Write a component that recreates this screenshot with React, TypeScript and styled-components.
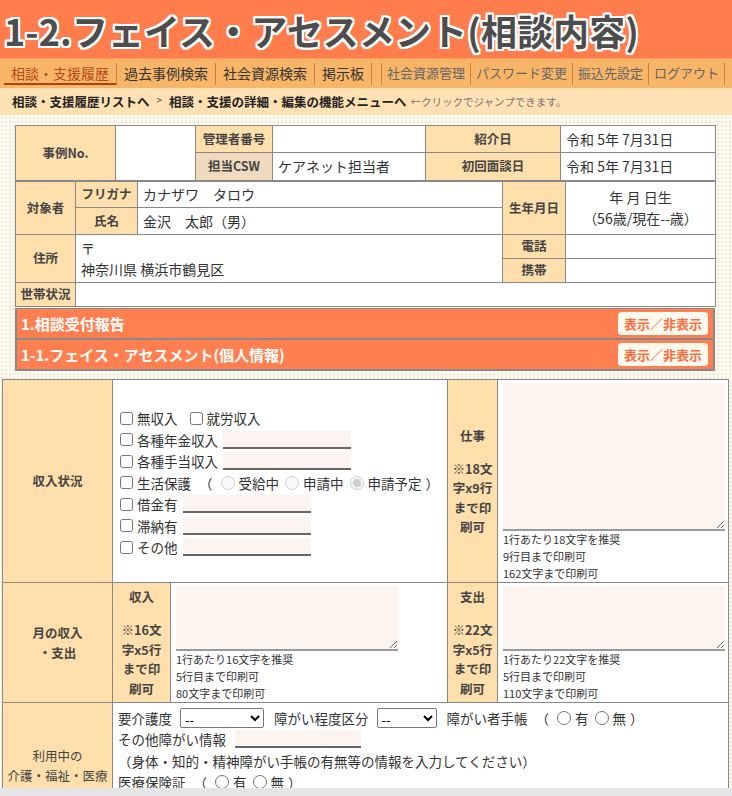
import React from 'react';
import styled, { createGlobalStyle } from 'styled-components';

const Global = createGlobalStyle`
  html, body { margin: 0; padding: 0; }
  body {
    font-family: "Noto Sans CJK JP", "Noto Sans", sans-serif;
    color: #333;
    background-color: #fcf9ef;
    background-image: radial-gradient(#eee8d4 0.7px, transparent 0.9px);
    background-size: 4px 4px;
  }
  input, select, textarea, button { font-family: inherit; }
`;

const Header = styled.header`
  background: #ff7c4d;
  height: 58px;
  padding-left: 4px;
  display: flex;
  align-items: center;
`;

const Title = styled.h1`
  margin: 2px 0 0;
  font-size: 36px;
  font-weight: 700;
  line-height: 1;
  color: #4d4d4d;
  letter-spacing: 0.1px;
  text-shadow:
    -2px -2px 0 #fff, 0 -2px 0 #fff, 2px -2px 0 #fff, 2px 0 0 #fff,
    2px 2px 0 #fff, 0 2px 0 #fff, -2px 2px 0 #fff, -2px 0 0 #fff,
    -1px -2px 0 #fff, 1px -2px 0 #fff, -1px 2px 0 #fff, 1px 2px 0 #fff;
`;

const Nav = styled.nav`
  background: #f8b567;
  border-top: 1px solid #fb9d60;
  height: 29px;
  padding-left: 4px;
  display: flex;
  align-items: center;
`;

const NavGroup = styled.div`
  display: flex;
  align-items: center;
`;

const NavItem = styled.a<{ $active?: boolean }>`
  padding: 0 7px 2px;
  font-size: 14px;
  line-height: 20px;
  color: ${(p) => (p.$active ? '#b5491a' : '#333')};
  border-right: 1px solid #c98143;
  text-decoration: none;
  box-shadow: ${(p) => (p.$active ? 'inset 0 -2px 0 #a84414' : 'none')};
`;

const SubNav = styled.div`
  display: flex;
  align-items: center;
  margin-left: 9px;
  border-right: 1px solid #c98143;
`;

const SubNavItem = styled.a`
  padding: 0 5px 2px;
  font-size: 13px;
  line-height: 20px;
  color: #666;
  border-left: 1px solid #c98143;
`;

const Breadcrumb = styled.div`
  background: #ffe1b3;
  height: 27px;
  padding-left: 12px;
  display: flex;
  align-items: center;
  gap: 2px;
`;

const Crumb = styled.a`
  font-size: 12.5px;
  font-weight: 700;
  color: #222;
`;

const CrumbSep = styled.span`
  font-size: 10px;
  color: #444;
  margin: 0 5px 4px;
`;

const CrumbHint = styled.span`
  font-size: 10.5px;
  color: #777;
  margin-left: 2px;
`;

const Content = styled.main`
  padding: 10px 17px 0 15px;
  display: flex;
  flex-direction: column;
`;

const InfoTable = styled.table`
  width: 700px;
  border-collapse: collapse;
  table-layout: fixed;
  background: #fff;
  border: 1px solid #777;
`;

const Row = styled.tr<{ $h: number }>`
  height: ${(p) => p.$h}px;
`;

const Label = styled.th<{ $tone?: 'csw' }>`
  background: ${(p) => (p.$tone === 'csw' ? '#efdabd' : '#ffdfab')};
  border: 1px solid #888;
  font-size: 12.5px;
  font-weight: 700;
  color: #444;
  text-align: center;
  padding: 0 3px;
  line-height: 1.3;
`;

const Cell = styled.td<{ $center?: boolean }>`
  border: 1px solid #888;
  font-size: 14px;
  color: #333;
  padding: 0 5px;
  text-align: ${(p) => (p.$center ? 'center' : 'left')};
  line-height: 21px;
`;

const SectionGroup = styled.div`
  margin-top: 1px;
  border: 2px solid #888;
  border-top-width: 1px;
`;

const SectionBar = styled.div`
  background: #ff7f50;
  height: 29px;
  padding: 0 5px 0 4px;
  display: flex;
  align-items: center;
  justify-content: space-between;
  color: #fff;
  font-size: 15px;
  font-weight: 700;
  & + & { border-top: 2px solid #888; }
`;

const ToggleButton = styled.button`
  background: #fffaf0;
  color: #ff6a3a;
  border: none;
  border-radius: 4px;
  font-size: 13px;
  font-weight: 700;
  height: 23px;
  padding: 0 6px;
`;

const FormTable = styled.table`
  width: 726px;
  margin: 8px 0 0 2px;
  border-collapse: collapse;
  table-layout: fixed;
  background: #fff;
  border: 1px solid #777;
`;

const FLabel = styled.th<{ $plain?: boolean }>`
  background: #ffdfab;
  border: 1px solid #888;
  font-size: 12.5px;
  font-weight: ${(p) => (p.$plain ? 400 : 700)};
  color: #444;
  text-align: center;
  padding: 0 2px;
  line-height: 20px;
`;

const LabelNote = styled.div`
  margin-top: 13px;
  line-height: 19.5px;
`;

const FCell = styled.td<{ $top?: boolean }>`
  border: 1px solid #888;
  font-size: 13.5px;
  color: #333;
  padding: ${(p) => (p.$top ? '4px 5px 0 5px' : '3px 4px 0 5px')};
  vertical-align: ${(p) => (p.$top ? 'top' : 'middle')};
`;

const Line = styled.div`
  display: flex;
  align-items: center;
  height: 21.5px;
  white-space: nowrap;
`;

const Check = styled.input.attrs({ type: 'checkbox' })`
  width: 13px;
  height: 13px;
  margin: 0 4px 0 2px;
`;

const Radio = styled.input.attrs({ type: 'radio' })`
  width: 14px;
  height: 14px;
  margin: 0 4px 0 6px;
`;

const Paren = styled.span`
  margin: 0 2px 0 8px;
`;

const CloseParen = styled.span`
  margin-left: 4px;
`;

const TextField = styled.input<{ $w: number }>`
  width: ${(p) => p.$w}px;
  height: 18px;
  box-sizing: border-box;
  background: #fcf4ee;
  border: none;
  border-bottom: 2px solid #666;
  margin-left: 5px;
  padding: 0 3px;
`;

const Memo = styled.textarea<{ $h: number }>`
  display: block;
  width: 222px;
  height: ${(p) => p.$h}px;
  box-sizing: border-box;
  background: #fcf4ee;
  border: none;
  border-bottom: 2px solid #9a9a9a;
  margin: 0;
`;

const Notes = styled.div`
  font-size: 11px;
  line-height: 17px;
  color: #333;
`;

const Select = styled.select<{ $w: number }>`
  width: ${(p) => p.$w}px;
  height: 20px;
  font-size: 13px;
  margin: 0 10px 0 8px;
  background: #fff;
  border: 1px solid #767676;
  border-radius: 2px;
`;

const BottomBar = styled.div`
  position: fixed;
  left: 0;
  right: 0;
  bottom: 0;
  height: 8px;
  background: #e5e5e5;
`;

const incomeRows = ['各種年金収入', '各種手当収入'];

function PrintNote({ head, chars, lines }: { head: string; chars: number; lines: number }) {
  return (
    <FLabel>
      {head}
      <LabelNote>
        ※{chars}文
        <br />
        字x{lines}行
        <br />
        まで印
        <br />
        刷可
      </LabelNote>
    </FLabel>
  );
}

function MemoCell({ h, chars, lines }: { h: number; chars: number; lines: number }) {
  return (
    <FCell>
      <Memo $h={h} />
      <Notes>
        1行あたり{chars}文字を推奨
        <br />
        {lines}行目まで印刷可
        <br />
        {chars * lines}文字まで印刷可
      </Notes>
    </FCell>
  );
}

export default function App() {
  return (
    <>
      <Global />
      <Header>
        <Title>1-2.フェイス・アセスメント(相談内容)</Title>
      </Header>
      <Nav>
        <NavGroup>
          <NavItem $active>相談・支援履歴</NavItem>
          <NavItem>過去事例検索</NavItem>
          <NavItem>社会資源検索</NavItem>
          <NavItem>掲示板</NavItem>
        </NavGroup>
        <SubNav>
          {['社会資源管理', 'パスワード変更', '振込先設定', 'ログアウト'].map((t) => (
            <SubNavItem key={t}>{t}</SubNavItem>
          ))}
        </SubNav>
      </Nav>
      <Breadcrumb>
        <Crumb>相談・支援履歴リストへ</Crumb>
        <CrumbSep>&gt;</CrumbSep>
        <Crumb>相談・支援の詳細・編集の機能メニューへ</Crumb>
        <CrumbHint>←クリックでジャンプできます。</CrumbHint>
      </Breadcrumb>

      <Content>
        <InfoTable>
          <colgroup>
            <col style={{ width: 100 }} />
            <col style={{ width: 80 }} />
            <col style={{ width: 77 }} />
            <col style={{ width: 153 }} />
            <col style={{ width: 135 }} />
            <col style={{ width: 155 }} />
          </colgroup>
          <tbody>
            <Row $h={27}>
              <Label rowSpan={2}>事例No.</Label>
              <Cell rowSpan={2} />
              <Label>管理者番号</Label>
              <Cell />
              <Label>紹介日</Label>
              <Cell>令和 5年 7月31日</Cell>
            </Row>
            <Row $h={28}>
              <Label $tone="csw">担当CSW</Label>
              <Cell>ケアネット担当者</Cell>
              <Label>初回面談日</Label>
              <Cell>令和 5年 7月31日</Cell>
            </Row>
          </tbody>
        </InfoTable>

        <InfoTable>
          <colgroup>
            <col style={{ width: 60 }} />
            <col style={{ width: 62 }} />
            <col style={{ width: 365 }} />
            <col style={{ width: 63 }} />
            <col style={{ width: 150 }} />
          </colgroup>
          <tbody>
            <Row $h={26}>
              <Label rowSpan={2}>対象者</Label>
              <Label>フリガナ</Label>
              <Cell>カナザワ　タロウ</Cell>
              <Label rowSpan={2}>生年月日</Label>
              <Cell rowSpan={2} $center>
                年 月 日生
                <br />
                （56歳/現在--歳）
              </Cell>
            </Row>
            <Row $h={27}>
              <Label>氏名</Label>
              <Cell>金沢　太郎（男）</Cell>
            </Row>
            <Row $h={24}>
              <Label rowSpan={2}>住所</Label>
              <Cell rowSpan={2} colSpan={2}>
                〒
                <br />
                神奈川県 横浜市鶴見区
              </Cell>
              <Label>電話</Label>
              <Cell />
            </Row>
            <Row $h={24}>
              <Label>携帯</Label>
              <Cell />
            </Row>
            <Row $h={24}>
              <Label>世帯状況</Label>
              <Cell colSpan={4} />
            </Row>
          </tbody>
        </InfoTable>

        <SectionGroup>
          <SectionBar>
            <span>1.相談受付報告</span>
            <ToggleButton>表示／非表示</ToggleButton>
          </SectionBar>
          <SectionBar>
            <span>1-1.フェイス・アセスメント(個人情報)</span>
            <ToggleButton>表示／非表示</ToggleButton>
          </SectionBar>
        </SectionGroup>
      </Content>

      <FormTable>
        <colgroup>
          <col style={{ width: 110 }} />
          <col style={{ width: 58 }} />
          <col style={{ width: 277 }} />
          <col style={{ width: 50 }} />
          <col style={{ width: 231 }} />
        </colgroup>
        <tbody>
          <tr>
            <FLabel>収入状況</FLabel>
            <FCell colSpan={2}>
              <Line>
                <Check />
                無収入
                <Check style={{ marginLeft: 12 }} />
                就労収入
              </Line>
              {incomeRows.map((t) => (
                <Line key={t}>
                  <Check />
                  {t}
                  <TextField $w={128} />
                </Line>
              ))}
              <Line>
                <Check />
                生活保護
                <Paren>（</Paren>
                <Radio name="seiho" disabled />
                受給中
                <Radio name="seiho" disabled />
                申請中
                <Radio name="seiho" disabled defaultChecked />
                申請予定
                <CloseParen>）</CloseParen>
              </Line>
              {['借金有', '滞納有', 'その他'].map((t) => (
                <Line key={t}>
                  <Check />
                  {t}
                  <TextField $w={128} />
                </Line>
              ))}
            </FCell>
            <PrintNote head="仕事" chars={18} lines={9} />
            <MemoCell h={148} chars={18} lines={9} />
          </tr>
          <tr>
            <FLabel>
              月の収入
              <br />
              ・支出
            </FLabel>
            <PrintNote head="収入" chars={16} lines={5} />
            <MemoCell h={65} chars={16} lines={5} />
            <PrintNote head="支出" chars={22} lines={5} />
            <MemoCell h={65} chars={22} lines={5} />
          </tr>
          <Row $h={146}>
            <FLabel $plain>
              利用中の
              <br />
              介護・福祉・医療
              <br />
              制度
            </FLabel>
            <FCell colSpan={4} $top>
              <Line>
                要介護度
                <Select $w={84} defaultValue="--">
                  <option>--</option>
                </Select>
                障がい程度区分
                <Select $w={60} defaultValue="--">
                  <option>--</option>
                </Select>
                障がい者手帳
                <Paren>（</Paren>
                <Radio name="techo" />有
                <Radio name="techo" />無
                <CloseParen>）</CloseParen>
              </Line>
              <Line>
                その他障がい情報
                <TextField $w={126} style={{ marginLeft: 9 }} />
              </Line>
              <Line>（身体・知的・精神障がい手帳の有無等の情報を入力してください）</Line>
              <Line>
                医療保険証
                <Paren>（</Paren>
                <Radio name="hoken" />有
                <Radio name="hoken" />無
                <CloseParen>）</CloseParen>
              </Line>
            </FCell>
          </Row>
        </tbody>
      </FormTable>
      <BottomBar />
    </>
  );
}
